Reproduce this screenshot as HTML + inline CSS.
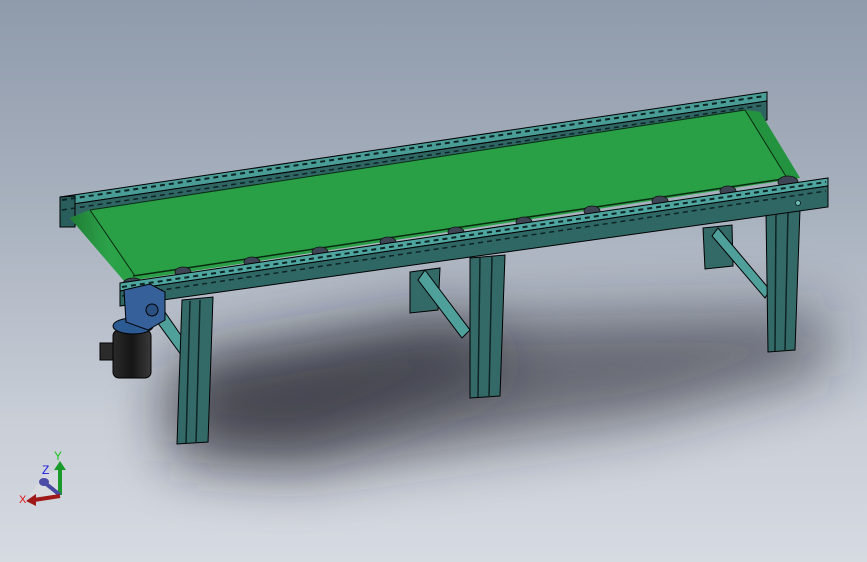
<!DOCTYPE html>
<html><head><meta charset="utf-8"><style>
html,body{margin:0;padding:0;width:867px;height:562px;overflow:hidden}
body{background:linear-gradient(180deg,#8f9aab 0%,#aab3c0 40%,#c9ced7 75%,#d6dae1 100%)}
svg{position:absolute;left:0;top:0}
</style></head><body>
<svg width="867" height="562" viewBox="0 0 867 562" xmlns="http://www.w3.org/2000/svg">
<defs>
<filter id="bl" x="-30%" y="-50%" width="160%" height="200%"><feGaussianBlur stdDeviation="30"/></filter>
<linearGradient id="roll" x1="0" y1="0" x2="1" y2="0"><stop offset="0" stop-color="#1f7d35"/><stop offset="0.6" stop-color="#2ca34a"/><stop offset="1" stop-color="#28a044"/></linearGradient>
<linearGradient id="mot" x1="0" y1="0" x2="1" y2="0"><stop offset="0" stop-color="#2a2a2a"/><stop offset="0.5" stop-color="#151515"/><stop offset="1" stop-color="#3a3a3a"/></linearGradient>
</defs>
<!-- shadow -->
<polygon points="170,370 420,320 820,310 830,370 650,420 300,470 170,460" fill="#1a1e26" opacity="0.55" filter="url(#bl)"/>
<polygon points="190,360 460,320 520,370 300,450 180,440" fill="#1a1e26" opacity="0.5" filter="url(#bl)"/>
<!-- back legs -->
<g stroke="#000" stroke-width="1">
<polygon points="410,272 440,268 438,310 410,313" fill="#336a68"/>
<polygon points="703,228 732,225 733,266 705,269" fill="#336a68"/>
<polygon points="425,270 470,330 462,338 418,280" fill="#4fa09b"/>
<polygon points="718,228 770,290 765,298 712,236" fill="#4fa09b"/>
<!-- back rail -->
<polygon points="60,197 767,92 767,101 60,206" fill="#4a9c97"/>
<polygon points="60,206 767,101 767,120 60,227" fill="#2f6664"/>
<polygon points="60,197 75,196 75,227 60,227" fill="#2a5e5c"/>
</g>
<path d="M62,200 L765,96" stroke="#0c2423" stroke-width="2" stroke-dasharray="5,4"/>
<path d="M62,210 L765,105" stroke="#0c2423" stroke-width="1.5" stroke-dasharray="5,4"/>
<!-- belt -->
<polygon points="90,210 745,110 760,112 800,178 135,280 125,282 70,218" fill="#29a046"/>
<polygon points="70,218 90,210 135,276 125,282" fill="url(#roll)"/>
<polygon points="745,110 760,112 800,178 787,178" fill="#24933f"/>
<path d="M90,210 L135,276 M745,110 L787,178 M90,210 L745,110" stroke="#0a2a10" stroke-width="1" fill="none"/>
<path d="M133,276 L790,178" stroke="#0a2a10" stroke-width="1.5"/>
<!-- rollers -->
<g fill="#3e4656" stroke="#111" stroke-width="0.8">
<ellipse cx="183" cy="272" rx="8" ry="5"/><ellipse cx="252" cy="262" rx="8" ry="5"/><ellipse cx="320" cy="252" rx="8" ry="5"/><ellipse cx="388" cy="242" rx="8" ry="5"/><ellipse cx="456" cy="232" rx="8" ry="5"/><ellipse cx="524" cy="222" rx="8" ry="5"/><ellipse cx="592" cy="211" rx="8" ry="5"/><ellipse cx="660" cy="201" rx="8" ry="5"/><ellipse cx="728" cy="191" rx="8" ry="5"/><ellipse cx="788" cy="182" rx="10" ry="6"/><ellipse cx="133" cy="284" rx="10" ry="6"/>
</g>
<!-- front legs & braces -->
<g stroke="#000" stroke-width="1">
<polygon points="160,305 205,370 198,378 152,315" fill="#4fa09b"/>
<polygon points="182,300 213,297 208,442 177,444" fill="#336a68"/>
<polygon points="470,258 505,255 500,396 470,398" fill="#336a68"/>
<polygon points="766,212 800,209 795,350 768,352" fill="#336a68"/>
</g>
<g stroke="#0c2423" stroke-width="1.5">
<path d="M190,301 L186,443 M200,300 L196,443"/>
<path d="M480,257 L478,397 M492,256 L489,397"/>
<path d="M776,211 L775,351 M788,210 L785,351"/>
</g>
<!-- front rail -->
<g stroke="#000" stroke-width="1">
<polygon points="120,283 828,178 828,186 120,291" fill="#4fa59f"/>
<polygon points="120,291 828,186 828,207 120,306" fill="#2f6765"/>
</g>
<path d="M122,287 L826,182" stroke="#0c2423" stroke-width="2" stroke-dasharray="5,4"/>
<path d="M122,296 L826,191" stroke="#0c2423" stroke-width="1.5" stroke-dasharray="5,4"/>
<circle cx="798" cy="203" r="2.5" fill="#6ab9b3" stroke="#000" stroke-width="0.6"/>
<!-- motor -->
<g stroke="#000" stroke-width="1">
<rect x="100" y="343" width="18" height="17" fill="#2b2b2b"/>
<rect x="113" y="330" width="38" height="48" rx="6" fill="url(#mot)"/>
<ellipse cx="133" cy="326" rx="20" ry="8" fill="#2c5a92"/>
<polygon points="124,290 150,284 165,292 165,320 148,330 126,322" fill="#35609a"/>
<circle cx="152" cy="310" r="6" fill="#2a4f82"/>
</g>
<!-- triad -->
<polygon points="28,497 44,475 60,470 62,495" fill="#d8dbe0" opacity="0.8"/>
<line x1="60" y1="495" x2="60" y2="468" stroke="#1a9a2a" stroke-width="4"/>
<polygon points="54,470 66,470 60,461" fill="#1a9a2a"/>
<line x1="60" y1="495" x2="45" y2="483" stroke="#4848a0" stroke-width="4"/>
<ellipse cx="44" cy="482" rx="5" ry="4" fill="#4c4ca8"/>
<line x1="60" y1="496" x2="34" y2="500" stroke="#a01818" stroke-width="4"/>
<polygon points="36,494 36,506 26,501" fill="#a01818"/>
<text x="54" y="460" font-family="Liberation Sans,sans-serif" font-size="12" fill="#19c41c">Y</text>
<text x="42" y="474" font-family="Liberation Sans,sans-serif" font-size="12" fill="#1a1ae0">Z</text>
<text x="19" y="503" font-family="Liberation Sans,sans-serif" font-size="11" fill="#e01010">X</text>
</svg>
</body></html>
